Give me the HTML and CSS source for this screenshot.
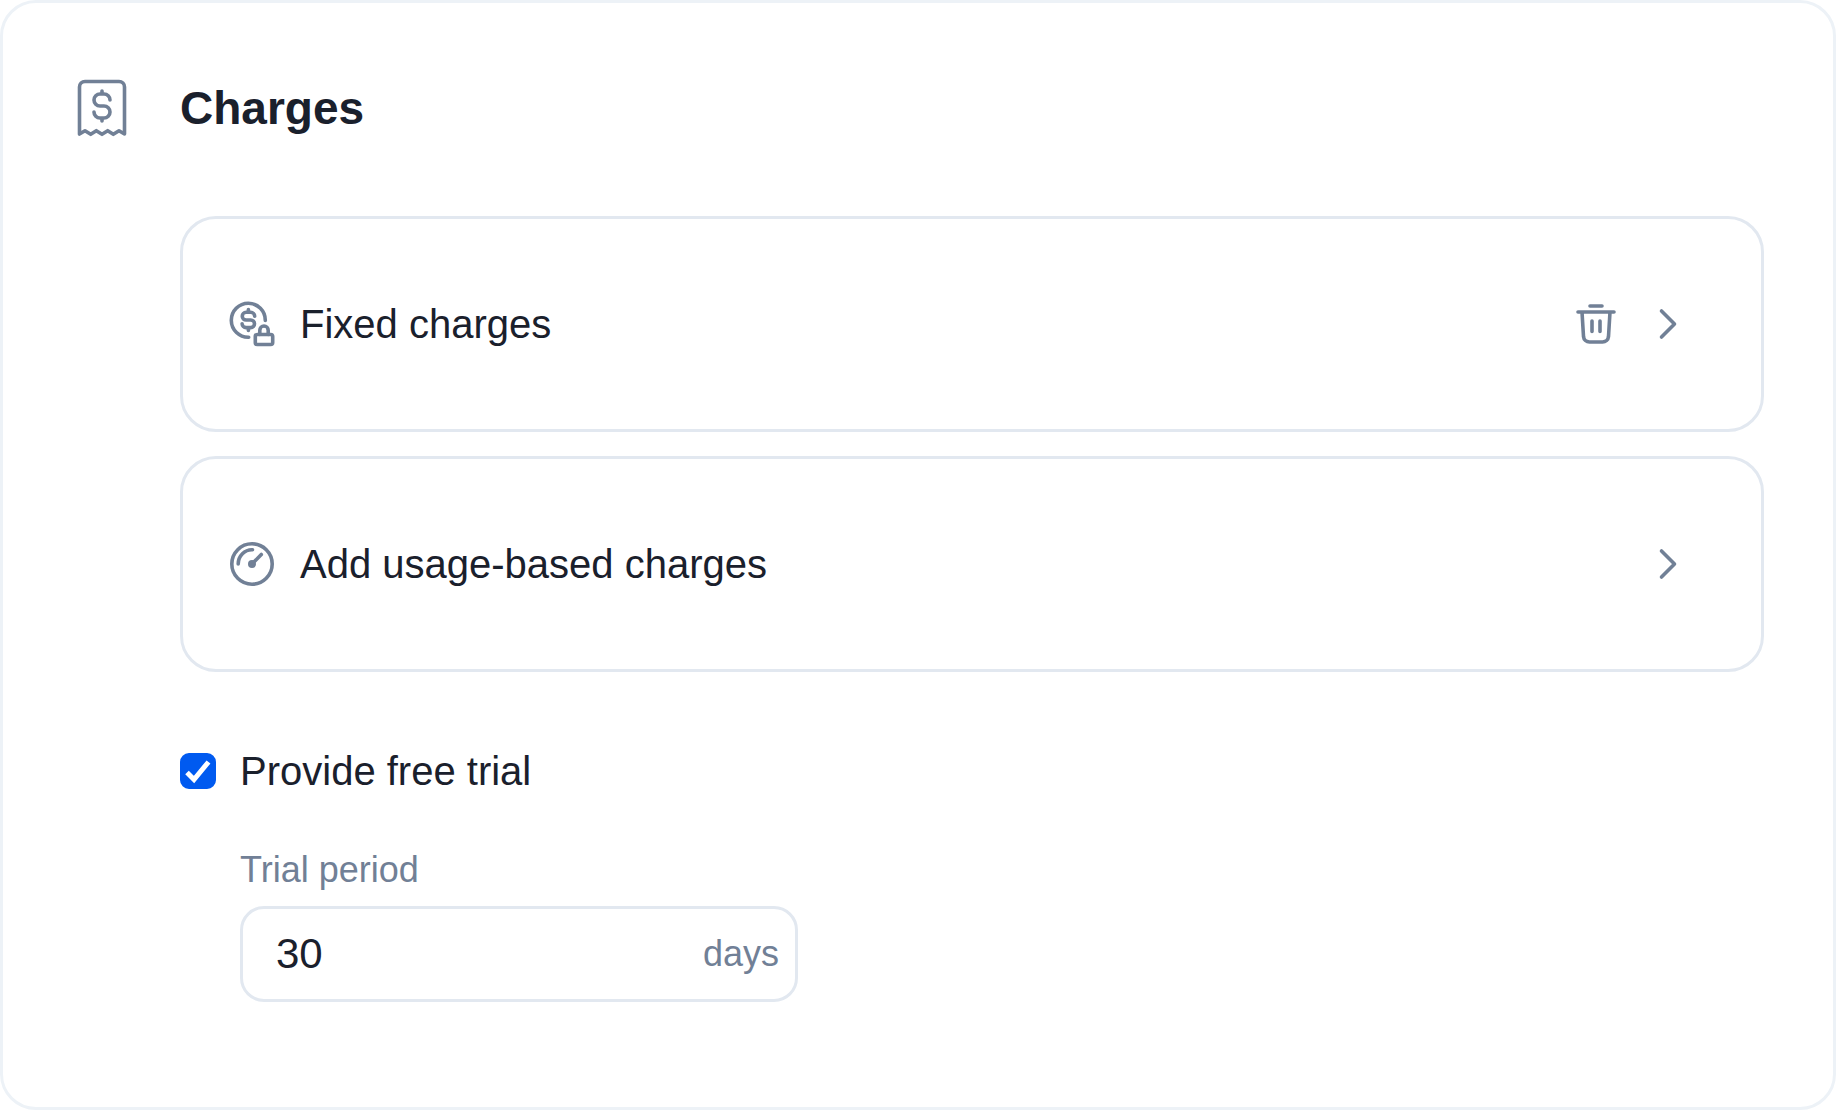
FILE: index.html
```html
<!DOCTYPE html>
<html lang="en">
<head>
<meta charset="utf-8">
<meta name="viewport" content="width=device-width, initial-scale=1">
<title>Charges</title>
<link rel="stylesheet" href="styles.css">
</head>
<body>
<main class="panel">
  <header class="panel-header">
    <svg class="icon icon-large" viewBox="0 0 72 72" aria-hidden="true">
      <path d="M13.500 62V15a5.500 5.500 0 0 1 5.500-5.500h34a5.500 5.500 0 0 1 5.500 5.500v47L53 58.700l-5.700 3.600-5.600-3.600-5.700 3.600-5.700-3.600-5.600 3.600L19 58.700z"/>
      <path d="M44 28a6 6 0 0 0-6-6h-4a6 6 0 0 0 0 12h4a6 6 0 0 1 0 12h-4a6 6 0 0 1-6-6M36 19v3M36 46v3"/>
    </svg>
    <h1 class="panel-title">Charges</h1>
  </header>
  <div class="panel-body">
    <ul class="charge-list">
      <li class="charge">
        <svg class="icon" viewBox="0 0 48 48" aria-hidden="true">
          <path d="M37.300 20.500a17 17 0 1 0-16.600 16.800"/>
          <path d="M26.700 16.200a4 4 0 0 0-4-3.900h-4.600a3.850 3.850 0 0 0 0 7.700h4.600a3.800 3.800 0 0 1 0 7.600h-4.600a4 4 0 0 1-4-3.900M20.400 9.500v2.800M20.400 27.600v2.800"/>
          <rect x="27.300" y="34.500" width="17.400" height="10" rx="2"/>
          <path d="M31.800 34.500v-4.300a4.200 4.200 0 0 1 8.400 0v4.300"/>
        </svg>
        <button class="charge-name" type="button">Fixed charges</button>
        <button class="icon-button" type="button" aria-label="Delete fixed charges">
          <svg class="icon" viewBox="0 0 48 48" aria-hidden="true">
            <path d="M18 6h12M6 12h36M10 12l1.500 24.500a6 6 0 0 0 6 5.500h13a6 6 0 0 0 6-5.500L38 12M20 21v10.500M28 21v10.500"/>
          </svg>
        </button>
        <button class="icon-button" type="button" aria-label="Open fixed charges">
          <svg class="icon" viewBox="0 0 48 48" aria-hidden="true"><path d="M17.500 11l13 13-13 13"/></svg>
        </button>
      </li>
      <li class="charge">
        <svg class="icon" viewBox="0 0 48 48" aria-hidden="true">
          <circle cx="24" cy="24" r="20.200"/>
          <path d="M10.200 24A13.800 14.300 0 0 1 24.500 9.700M24 24l9.300-9.500"/>
          <circle class="icon-dot" cx="24" cy="24" r="4"/>
        </svg>
        <button class="charge-name" type="button">Add usage-based charges</button>
        <button class="icon-button" type="button" aria-label="Open usage-based charges">
          <svg class="icon" viewBox="0 0 48 48" aria-hidden="true"><path d="M17.500 11l13 13-13 13"/></svg>
        </button>
      </li>
    </ul>
    <div class="trial">
      <label class="trial-toggle">
        <span class="checkbox">
          <input class="checkbox-input" type="checkbox" checked>
          <svg class="checkbox-mark" viewBox="0 0 36 36" aria-hidden="true"><path d="M7 19.500l7 7L28.500 9"/></svg>
        </span>
        Provide free trial
      </label>
      <div class="field">
        <label class="field-label" for="trial-period">Trial period</label>
        <div class="field-box">
          <input class="field-input" id="trial-period" type="text" inputmode="numeric" value="30">
          <span class="field-unit">days</span>
        </div>
      </div>
    </div>
  </div>
</main>
</body>
</html>
```

FILE: styles.css
```css
:root {
  --ink: #1a202c;
  --muted: #718096;
  --line: #e2e8f0;
  --line-soft: #edf2f7;
  --accent: #005af0;
}

* {
  box-sizing: border-box;
}

body {
  margin: 0;
  background: #fff;
  color: var(--ink);
  font-family: "Liberation Sans", Arial, sans-serif;
  font-size: 40px;
}

button,
input {
  margin: 0;
  padding: 0;
  border: 0;
  background: none;
  color: inherit;
  font: inherit;
}

.panel {
  min-height: 100vh;
  padding: 69px 69px 69px 63px;
  border: 3px solid var(--line-soft);
  border-radius: 36px;
}

.panel-header {
  display: flex;
  align-items: center;
  gap: 42px;
}

.panel-title {
  margin: 0;
  font-size: 46px;
  line-height: 72px;
}

.panel-body {
  margin-top: 72px;
  padding-left: 114px;
}

.icon {
  display: block;
  flex: none;
  width: 48px;
  height: 48px;
  fill: none;
  stroke: var(--muted);
  stroke-width: 3.6;
  stroke-linecap: round;
  stroke-linejoin: round;
}

.icon-large {
  width: 72px;
  height: 72px;
}

.icon-dot {
  fill: var(--muted);
  stroke: none;
}

.charge-list {
  display: grid;
  gap: 24px;
  margin: 0;
  padding: 0;
  list-style: none;
}

.charge {
  display: flex;
  align-items: center;
  gap: 24px;
  min-height: 216px;
  padding: 0 69px 0 45px;
  border: 3px solid var(--line);
  border-radius: 36px;
}

.charge-name {
  flex: 1;
  line-height: 60px;
  text-align: left;
  cursor: pointer;
}

.icon-button {
  cursor: pointer;
}

.trial {
  margin-top: 69px;
}

.trial-toggle {
  display: flex;
  align-items: center;
  gap: 24px;
  line-height: 60px;
}

.checkbox {
  display: grid;
  width: 36px;
  height: 36px;
}

.checkbox-input,
.checkbox-mark {
  grid-area: 1 / 1;
  width: 36px;
  height: 36px;
}

.checkbox-input {
  appearance: none;
  border: 3px solid var(--line);
  border-radius: 9px;
}

.checkbox-input:checked {
  border-color: var(--accent);
  background: var(--accent);
}

.checkbox-mark {
  fill: none;
  stroke: #fff;
  stroke-width: 5;
  pointer-events: none;
}

.field {
  display: grid;
  gap: 12px;
  max-width: 618px;
  margin-top: 45px;
  padding-left: 60px;
}

.field-label {
  color: var(--muted);
  font-size: 36px;
  line-height: 48px;
}

.field-box {
  display: flex;
  align-items: center;
  height: 96px;
  padding: 0 16px 0 33px;
  border: 3px solid var(--line);
  border-radius: 24px;
}

.field-input {
  flex: 1;
  width: 0;
  min-width: 0;
  font-size: 42px;
  outline: none;
}

.field-unit {
  color: var(--muted);
  font-size: 36px;
}
```
